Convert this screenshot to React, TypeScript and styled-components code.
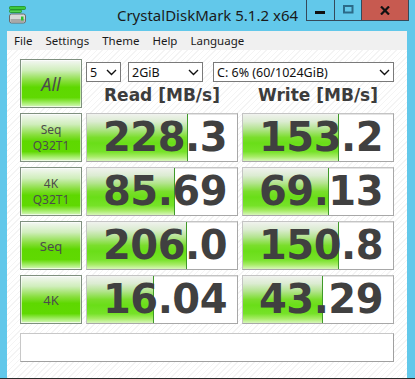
import React from "react";
import styled, { createGlobalStyle } from "styled-components";

const Global = createGlobalStyle`
  html, body { margin: 0; padding: 0; background: #62c8ea; }
  body { font-family: "Noto Sans", "DejaVu Sans", sans-serif; }
`;

const Window = styled.div`
  width: 415px;
  height: 379px;
  background: #62c8ea;
  display: flex;
  flex-direction: column;
  box-sizing: border-box;
  border-bottom: 1px solid #2b2b2b;
  overflow: hidden;
`;

const TitleBar = styled.div`
  height: 31px;
  display: grid;
  grid-template-columns: 1fr auto 1fr;
  align-items: start;
  flex-shrink: 0;
`;

const AppIcon = styled.svg`
  margin: 6px 0 0 9px;
  display: block;
`;

const Title = styled.div`
  font-family: "Noto Sans", sans-serif;
  font-size: 15px;
  line-height: 30px;
  color: #1a1a1a;
  white-space: nowrap;
`;

const Controls = styled.div`
  justify-self: end;
  display: flex;
  margin-right: 6px;
  height: 21px;
  box-sizing: border-box;
  border: 1px solid #35495a;
  border-top: none;
`;

const CtrlButton = styled.div<{ $w: number; $close?: boolean }>`
  width: ${(p) => p.$w}px;
  height: 100%;
  display: flex;
  align-items: center;
  justify-content: center;
  background: ${(p) => (p.$close ? "#c75a50" : "transparent")};
  & + & {
    border-left: 1px solid #35495a;
  }
`;

const Client = styled.div`
  margin: 0 8px 7px 7px;
  flex: 1;
  display: flex;
  flex-direction: column;
`;

const MenuBar = styled.div`
  height: 19px;
  background: #f0f0f0;
  display: flex;
  align-items: center;
  padding-left: 7px;
  gap: 13px;
  flex-shrink: 0;
`;

const MenuItem = styled.span`
  font-family: "Noto Sans", sans-serif;
  font-size: 11.5px;
  color: #1a1a1a;
  line-height: 19px;
`;

const Content = styled.div`
  flex: 1;
  background: repeating-linear-gradient(
    135deg,
    #ffffff 0px,
    #ffffff 3px,
    #f4f4f4 3px,
    #f4f4f4 4px
  );
  padding: 9px 13px 0 13px;
  display: grid;
  grid-template-columns: 62px 152px 152px;
  grid-auto-rows: 49px;
  column-gap: 4px;
  row-gap: 5px;
  align-content: start;
`;

const GreenButton = styled.div<{ $size: number; $lh: number; $italic?: boolean }>`
  box-sizing: border-box;
  border: 1px solid #7f907f;
  box-shadow: inset 0 0 0 1px rgba(255, 255, 255, 0.6);
  background: linear-gradient(
    to bottom,
    #f4f7f4 0%,
    #d0eebc 22%,
    #86de3a 45%,
    #5ed800 58%,
    #60d902 80%,
    #a8ee70 92%,
    #d8f8c0 100%
  );
  display: flex;
  flex-direction: column;
  align-items: center;
  justify-content: center;
  color: #4c4c4c;
  font-family: "Noto Sans", sans-serif;
  font-size: ${(p) => p.$size}px;
  font-style: ${(p) => (p.$italic ? "italic" : "normal")};
  line-height: ${(p) => p.$lh}px;
`;

const HeaderArea = styled.div`
  grid-column: 2 / span 2;
  display: flex;
  flex-direction: column;
  padding-top: 3px;
`;

const SelectRow = styled.div`
  display: flex;
  height: 20px;
`;

const Select = styled.div<{ $w: number; $ml: number }>`
  width: ${(p) => p.$w}px;
  margin-left: ${(p) => p.$ml}px;
  box-sizing: border-box;
  height: 20px;
  border: 1px solid #7a7a7a;
  background: #fff;
  display: flex;
  align-items: center;
  justify-content: space-between;
  padding: 0 3px 0 3px;
  font-family: "Noto Sans", sans-serif;
  font-size: 12.5px;
  color: #111;
`;

const Heads = styled.div`
  display: grid;
  grid-template-columns: 152px 152px;
  column-gap: 4px;
  flex: 1;
`;

const Head = styled.div`
  text-align: center;
  font-family: "DejaVu Sans", sans-serif;
  font-weight: bold;
  font-size: 17px;
  line-height: 26px;
  color: #3c3c3c;
`;

const Cell = styled.div`
  position: relative;
  box-sizing: border-box;
  border: 1px solid;
  border-color: #c4c4c4 #a8a8a8 #a8a8a8 #c4c4c4;
  box-shadow: inset 1px 1px 0 #e4e4e4;
  background: #fff;
  overflow: hidden;
`;

const Fill = styled.div`
  position: absolute;
  left: 0;
  top: 0;
  bottom: 0;
  border-right: 1px solid #3f9a28;
  background: linear-gradient(
    to bottom,
    #f0f2ee 0%,
    #dcecd2 16%,
    #b4e490 32%,
    #7ade2c 50%,
    #6ade18 62%,
    #76e228 80%,
    #a8ec68 91%,
    #d8f6bc 100%
  );
`;

const Value = styled.div`
  position: relative;
  text-align: right;
  padding-right: 10px;
  font-family: "DejaVu Sans", sans-serif;
  font-weight: bold;
  font-size: 40px;
  line-height: 47px;
  color: #404040;
  letter-spacing: -0.5px;
`;

const Comment = styled.div`
  grid-column: 1 / span 3;
  margin-top: 4px;
  height: 29px;
  box-sizing: border-box;
  border: 1px solid;
  border-color: #c8c8c8 #a0a0a0 #a0a0a0 #c8c8c8;
  background: #fff;
`;

const Chevron = () => (
  <svg width="11" height="7" viewBox="0 0 11 7">
    <path d="M1 1 L5.5 5.5 L10 1" fill="none" stroke="#111" strokeWidth="1.4" />
  </svg>
);

type Row = { l1: string; l2?: string; read: string; rf: number; write: string; wf: number };

const rows: Row[] = [
  { l1: "Seq", l2: "Q32T1", read: "228.3", rf: 100, write: "153.2", wf: 95 },
  { l1: "4K", l2: "Q32T1", read: "85.69", rf: 87, write: "69.13", wf: 85 },
  { l1: "Seq", read: "206.0", rf: 99, write: "150.8", wf: 95 },
  { l1: "4K", read: "16.04", rf: 66, write: "43.29", wf: 79 },
];

export default function App() {
  return (
    <>
      <Global />
      <Window>
        <TitleBar>
          <AppIcon width="17" height="18" viewBox="0 0 17 18">
            <rect x="0.5" y="0.5" width="16" height="3" rx="1" fill="#3cc83c" stroke="#1f8f1f" strokeWidth="0.8" />
            <rect x="0.5" y="4" width="12" height="2.5" rx="1" fill="#54d454" stroke="#1f8f1f" strokeWidth="0.8" />
            <rect x="0.5" y="8" width="16" height="9" rx="2" fill="#d8d8d8" stroke="#6a6a6a" strokeWidth="1" />
            <rect x="1.5" y="13" width="14" height="3" fill="#a8a8a8" />
            <rect x="12" y="10.5" width="2.5" height="4" fill="#2fbf2f" />
          </AppIcon>
          <Title>CrystalDiskMark 5.1.2 x64</Title>
          <Controls>
            <CtrlButton $w={27}>
              <svg width="11" height="4" viewBox="0 0 11 4" style={{ marginTop: 5 }}>
                <rect x="0" y="0" width="10" height="3" fill="#111" />
              </svg>
            </CtrlButton>
            <CtrlButton $w={26}>
              <svg width="11" height="9" viewBox="0 0 11 9" style={{ marginTop: -1 }}>
                <rect x="1" y="1" width="8.5" height="6.5" fill="none" stroke="#2b6a88" strokeWidth="2" />
              </svg>
            </CtrlButton>
            <CtrlButton $w={46} $close>
              <svg width="10" height="9" viewBox="0 0 10 9">
                <path d="M1 0.5 L9 8.5 M9 0.5 L1 8.5" stroke="#111" strokeWidth="2.2" />
              </svg>
            </CtrlButton>
          </Controls>
        </TitleBar>
        <Client>
          <MenuBar>
            <MenuItem>File</MenuItem>
            <MenuItem>Settings</MenuItem>
            <MenuItem>Theme</MenuItem>
            <MenuItem>Help</MenuItem>
            <MenuItem>Language</MenuItem>
          </MenuBar>
          <Content>
            <GreenButton $size={18} $lh={24} $italic>All</GreenButton>
            <HeaderArea>
              <SelectRow>
                <Select $w={35} $ml={0}>
                  <span>5</span>
                  <Chevron />
                </Select>
                <Select $w={75} $ml={7}>
                  <span>2GiB</span>
                  <Chevron />
                </Select>
                <Select $w={181} $ml={10}>
                  <span>C: 6% (60/1024GiB)</span>
                  <Chevron />
                </Select>
              </SelectRow>
              <Heads>
                <Head>Read [MB/s]</Head>
                <Head>Write [MB/s]</Head>
              </Heads>
            </HeaderArea>
            {rows.map((r, i) => (
              <React.Fragment key={i}>
                <GreenButton $size={r.l2 ? 12 : 13} $lh={16}>
                  <span>{r.l1}</span>
                  {r.l2 && <span>{r.l2}</span>}
                </GreenButton>
                <Cell>
                  <Fill style={{ width: r.rf }} />
                  <Value>{r.read}</Value>
                </Cell>
                <Cell>
                  <Fill style={{ width: r.wf }} />
                  <Value>{r.write}</Value>
                </Cell>
              </React.Fragment>
            ))}
            <Comment />
          </Content>
        </Client>
      </Window>
    </>
  );
}
